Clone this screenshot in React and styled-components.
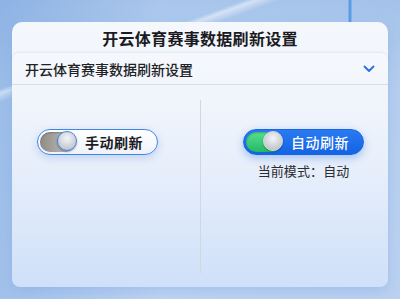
import React, { useState } from 'react'
import styled, { createGlobalStyle } from 'styled-components'

const Global = createGlobalStyle`
  html, body { margin: 0; padding: 0; }
  body {
    font-family: "Noto Sans CJK SC", "Noto Sans", sans-serif;
    background: #dde9f8;
  }
`

const Page = styled.div`
  width: 400px;
  height: 299px;
  box-sizing: border-box;
  padding: 22px 12px 12px;
  overflow: hidden;
  background:
    linear-gradient(90deg, transparent 348px, #5c9be8 349px, #5c9be8 351px, transparent 352px) 0 0 / 400px 22px no-repeat,
    linear-gradient(160deg, transparent 0 20%, rgba(255,255,255,0.5) 21%, transparent 23%),
    linear-gradient(180deg, #c9dcf3 0%, #dfeaf8 30%, #e6eefa 100%),
    linear-gradient(90deg, #b3cfef 0%, #d6e5f7 40%, #d0e1f5 100%);
  background-blend-mode: normal, normal, multiply, normal;
`

const Card = styled.div`
  height: 265px;
  display: flex;
  flex-direction: column;
  border-radius: 10px;
  background: linear-gradient(180deg, #f4f7fc 0%, #eaf1fb 100%);
  box-shadow: 0 6px 14px rgba(120, 160, 230, 0.35);
`

const Title = styled.div`
  height: 31px;
  display: flex;
  align-items: center;
  justify-content: center;
  font-size: 16px;
  font-weight: 700;
  color: #1b1b1f;
  letter-spacing: 0.3px;
`

const Panel = styled.div`
  flex: 1;
  display: flex;
  flex-direction: column;
  border-radius: 8px;
  background: linear-gradient(180deg, #f6f8fc 0%, #e9f0fb 45%, #cfe0f9 100%);
  box-shadow: 0 -1px 2px rgba(150, 170, 200, 0.2);
`

const PanelHead = styled.div`
  height: 31px;
  display: flex;
  align-items: center;
  justify-content: space-between;
  padding: 0 13px 0 13px;
  border-bottom: 1px solid #d9dde4;
  font-size: 14px;
  font-weight: 500;
  color: #202225;
`

const Body = styled.div`
  flex: 1;
  display: grid;
  grid-template-columns: 188px 1fr;
  padding: 15px 0 14px;
`

const Column = styled.div`
  display: flex;
  flex-direction: column;
  align-items: ${p => (p.$center ? 'center' : 'flex-start')};
  padding: 29px ${p => p.$right || 0}px 0 ${p => p.$left || 0}px;
  border-left: ${p => (p.$divider ? '1px solid #d2d7df' : 'none')};
`

const ToggleButton = styled.button`
  width: 121px;
  height: 26px;
  box-sizing: border-box;
  display: flex;
  align-items: center;
  padding: 0 0 0 2px;
  border-radius: 13px;
  cursor: pointer;
  font-family: inherit;
  font-size: 14px;
  font-weight: ${p => (p.$on ? 500 : 700)};
  color: ${p => (p.$on ? '#ffffff' : '#1b1b1f')};
  border: 1.5px solid ${p => (p.$on ? '#1766e6' : '#3d86f0')};
  background: ${p =>
    p.$on
      ? 'linear-gradient(180deg, #2a7af2 0%, #1463e4 100%)'
      : 'linear-gradient(180deg, #ffffff 0%, #eef3fa 100%)'};
  box-shadow: ${p =>
    p.$on
      ? '0 3px 8px rgba(30, 100, 220, 0.35)'
      : '0 3px 8px rgba(100, 140, 210, 0.3)'};
`

const Track = styled.span`
  position: relative;
  width: 36px;
  height: 20px;
  border-radius: 10px;
  flex-shrink: 0;
  background: ${p =>
    p.$on
      ? 'linear-gradient(180deg, #56e08e 0%, #25b966 100%)'
      : 'linear-gradient(90deg, #8f8c86 0%, #c9c7c2 100%)'};
  box-shadow: inset 0 1px 2px rgba(0, 0, 0, 0.25);
`

const Knob = styled.span`
  position: absolute;
  top: -1px;
  right: -1px;
  width: 18px;
  height: 18px;
  border-radius: 50%;
  background: radial-gradient(circle at 50% 35%, #f4f5f7 0%, #c6c9cf 70%, #a9adb5 100%);
  border: 1.5px solid ${p => (p.$on ? '#d8dbe0' : '#3d86f0')};
  box-shadow: 0 1px 2px rgba(0, 0, 0, 0.3);
`

const Label = styled.span`
  margin-left: 9px;
  letter-spacing: 0.5px;
`

const Status = styled.div`
  margin-top: 6px;
  font-size: 13px;
  color: #2a2c30;
  letter-spacing: 0.1px;
`

function Toggle({ on, label, onClick }) {
  return (
    <ToggleButton $on={on} onClick={onClick}>
      <Track $on={on}>
        <Knob $on={on} />
      </Track>
      <Label>{label}</Label>
    </ToggleButton>
  )
}

export default function App() {
  const [auto, setAuto] = useState(true)
  return (
    <>
      <Global />
      <Page>
        <Card>
          <Title>开云体育赛事数据刷新设置</Title>
          <Panel>
            <PanelHead>
              <span>开云体育赛事数据刷新设置</span>
              <svg width="12" height="8" viewBox="0 0 12 8">
                <polyline points="1.5,1.5 6,6 10.5,1.5" fill="none" stroke="#2a6de8" strokeWidth="1.8" strokeLinecap="round" strokeLinejoin="round" />
              </svg>
            </PanelHead>
            <Body>
              <Column $left={25}>
                <Toggle on={false} label="手动刷新" onClick={() => setAuto(false)} />
              </Column>
              <Column $divider $center $left={42} $right={25}>
                <Toggle on label="自动刷新" onClick={() => setAuto(true)} />
                <Status>当前模式：{auto ? '自动' : '手动'}</Status>
              </Column>
            </Body>
          </Panel>
        </Card>
      </Page>
    </>
  )
}
